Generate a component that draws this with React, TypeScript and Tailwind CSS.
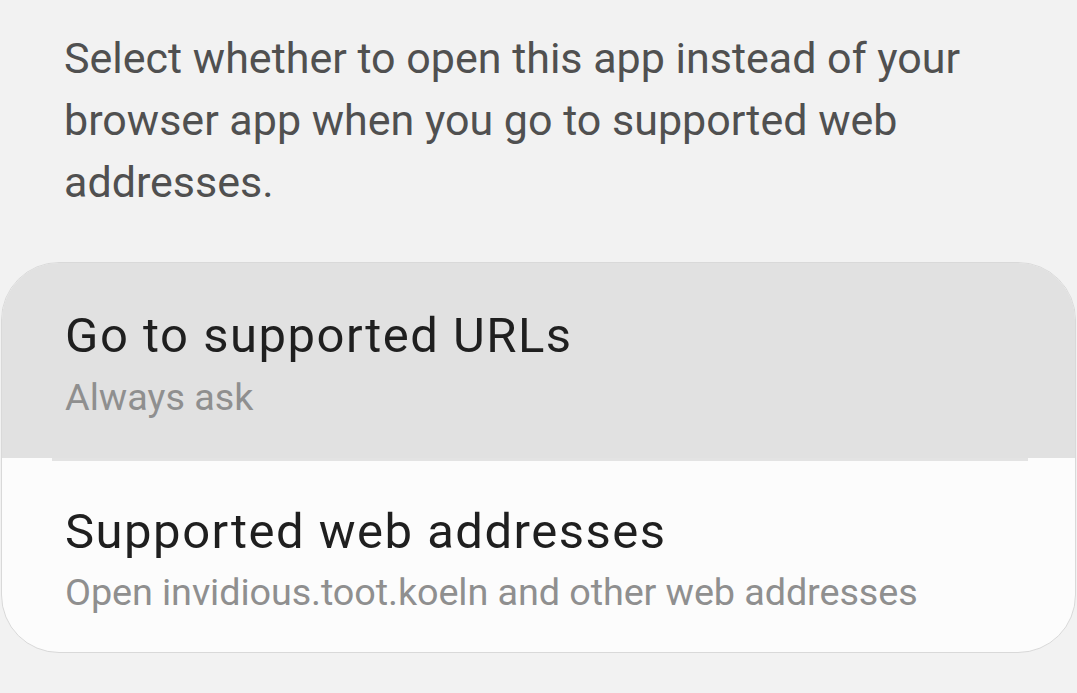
export default function App() {
  return (
    <div className="min-h-[693px] w-[1077px] overflow-hidden bg-[#f2f2f2] font-['Roboto',sans-serif]">
      <p className="px-[64px] pt-[27px] text-[43px] leading-[62px] text-[#505050]">
        Select whether to open this app instead of your browser app when you go to supported web addresses.
      </p>
      <div className="mt-[49px] ml-[1px] mr-[1px] overflow-hidden rounded-[58px] border border-[#d9d9d9] bg-[#fcfcfc]">
        <div className="bg-[#e1e1e1] pl-[63px] pt-[45px] pb-[37px]">
          <div className="text-[49px] leading-[56px] tracking-[1.5px] text-[#1f1f1f]">Go to supported URLs</div>
          <div className="mt-[9px] text-[37.8px] leading-[48px] text-[#8f8f8f]">Always ask</div>
        </div>
        <div className="ml-[50px] mr-[47px] h-[3px] bg-[#e3e3e3]" />
        <div className="pl-[63px] pt-[43px] pb-[36px]">
          <div className="text-[49px] leading-[56px] tracking-[1.5px] text-[#1f1f1f]">Supported web addresses</div>
          <div className="mt-[8px] text-[37.8px] leading-[48px] tracking-[-0.1px] text-[#8f8f8f]">
            Open invidious.toot.koeln and other web addresses
          </div>
        </div>
      </div>
    </div>
  )
}
